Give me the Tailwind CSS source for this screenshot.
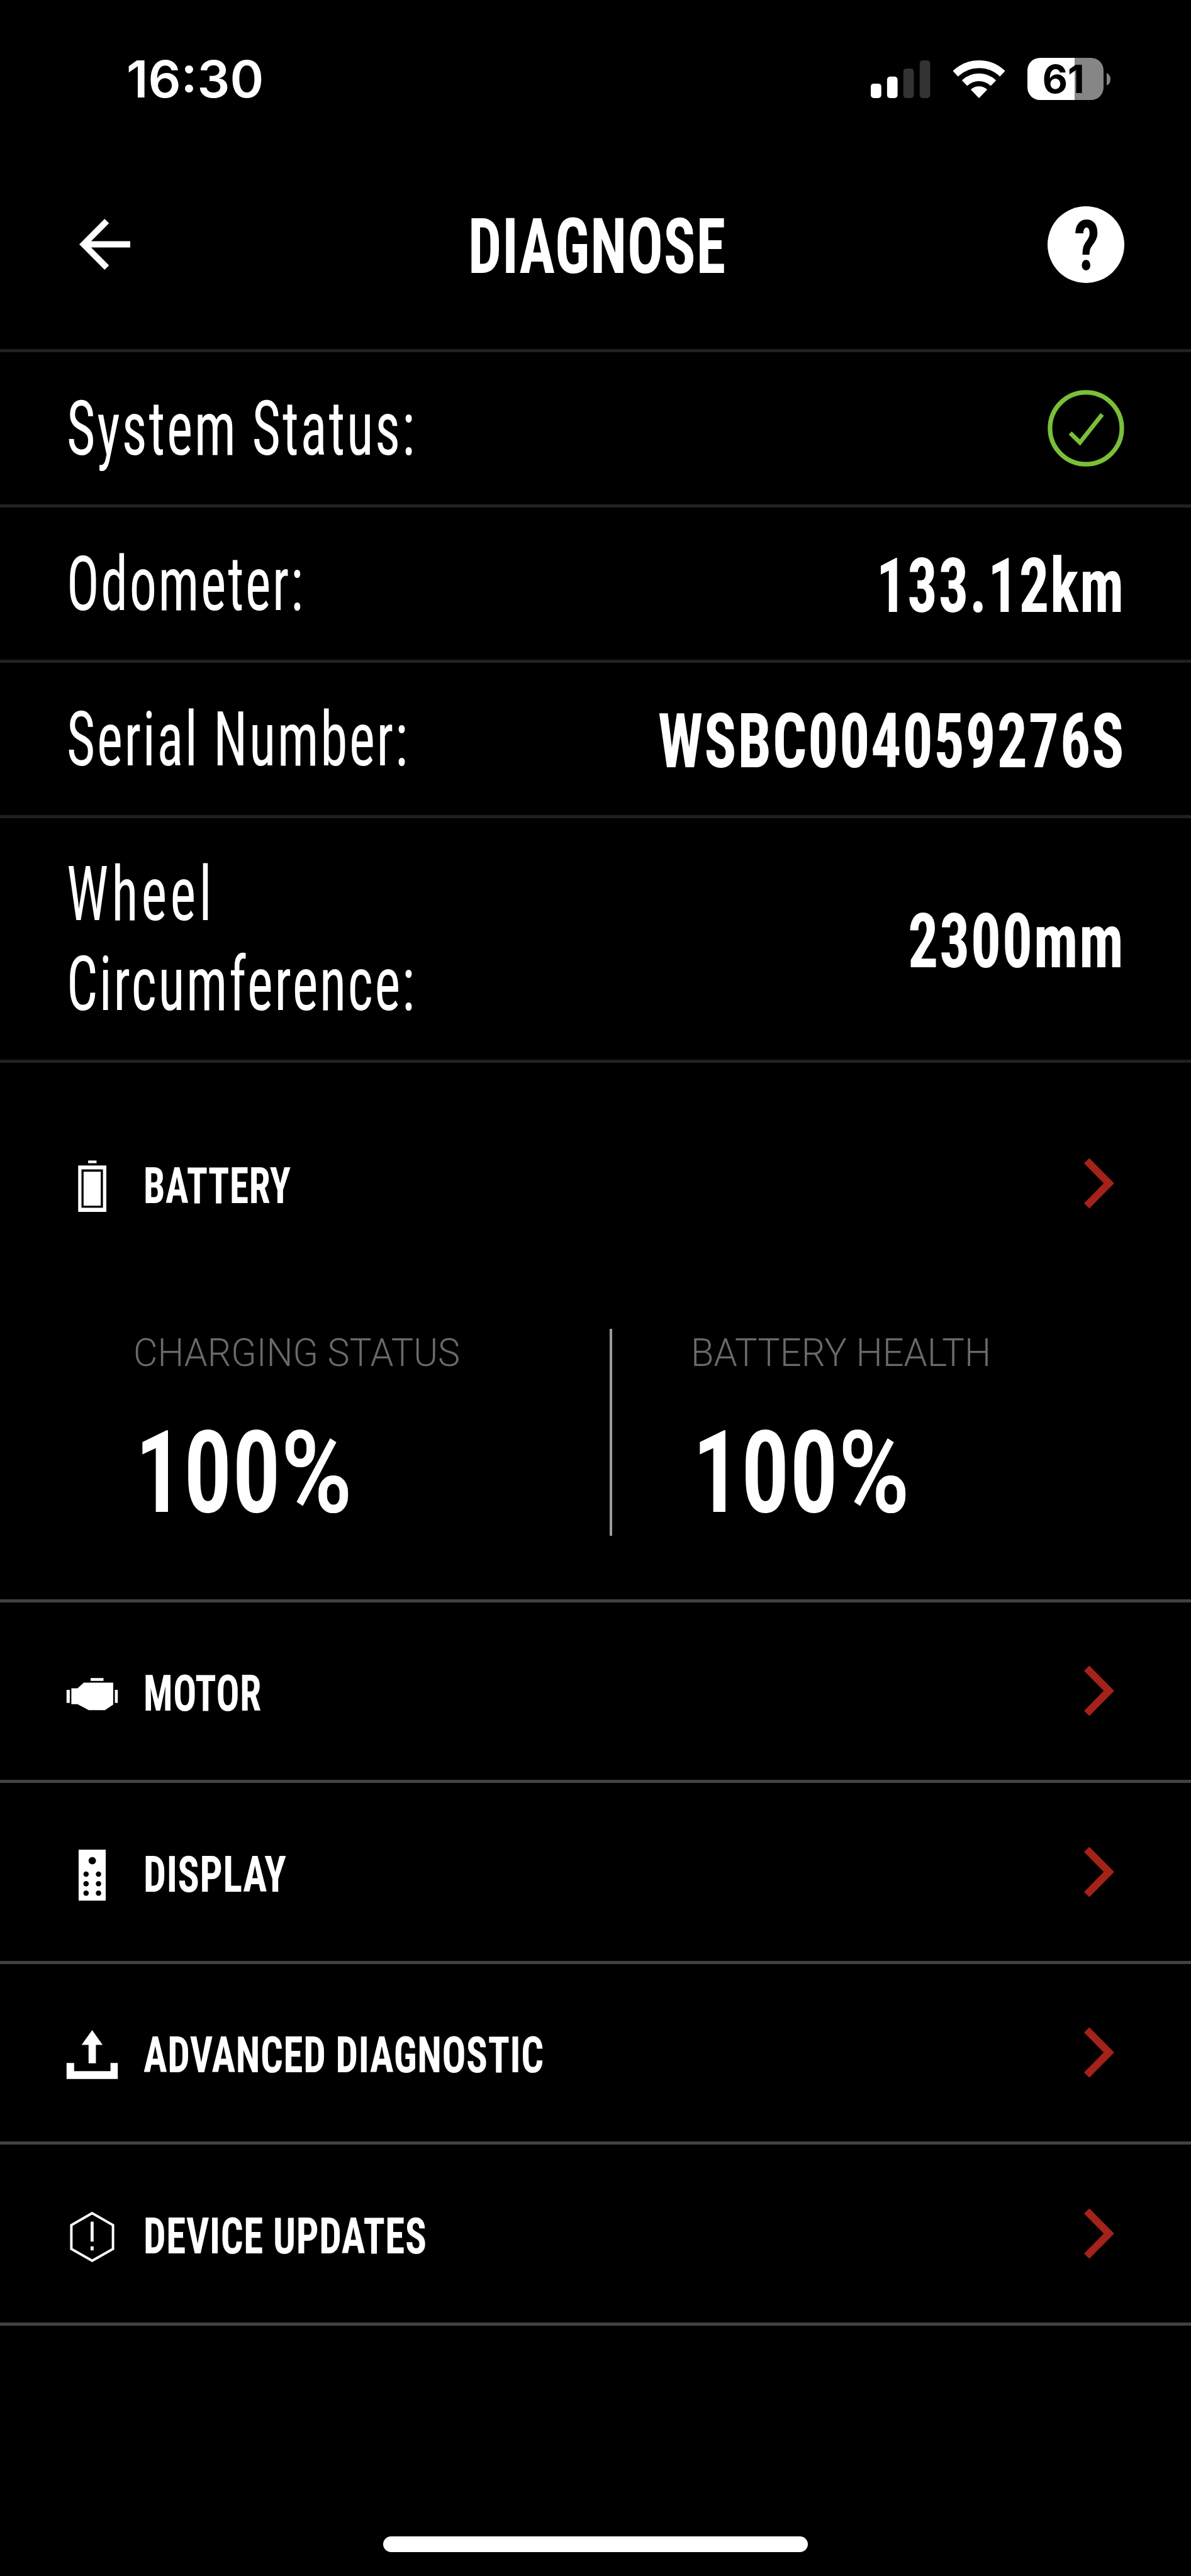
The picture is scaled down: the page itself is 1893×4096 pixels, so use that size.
<!DOCTYPE html>
<html lang="en">

<head>
   <meta charset="UTF-8">
   <meta name="viewport" content="width=device-width, initial-scale=1.0">
   <title>Diagnose</title>
   <script src="https://cdn.jsdelivr.net/npm/@tailwindcss/browser@4"></script>
</head>

<body class="bg-black">
   <div class="w-full h-[4096px] flex flex-col overflow-hidden bg-black text-white font-['Roboto',sans-serif] font-stretch-75%">

      <!-- Status bar -->
      <div class="h-[222px] shrink-0 flex items-center justify-between pt-[29px] pl-[201px] pr-[128px] font-['Inter',sans-serif] font-stretch-100%">
         <p class="text-[81.5px] leading-none font-semibold">16:30</p>
         <div class="flex items-center">
            <svg class="w-[94.5px] h-[60px]" viewBox="0 0 96 61">
               <rect x="0" y="37.5" width="17" height="23.5" rx="5" fill="#fff" />
               <rect x="26.3" y="26.3" width="17" height="34.7" rx="5" fill="#fff" />
               <rect x="52.6" y="13.3" width="17" height="47.7" rx="5" fill="#333" />
               <rect x="79" y="0" width="17" height="61" rx="5" fill="#333" />
            </svg>
            <svg class="w-[82px] h-[60px] ml-[36px]" viewBox="0 0 83 61" fill="none" stroke="#fff" stroke-width="12.4">
               <path d="M3.45 21.6A54.75 54.75 0 0 1 79.55 21.6" />
               <path d="M18.15 36.8A33.6 33.6 0 0 1 64.85 36.8" />
               <path d="M41.5 61 28.2 47.2A19.2 19.2 0 0 1 54.8 47.2Z" fill="#fff" stroke="none" />
            </svg>
            <div class="w-[121.5px] h-[67px] ml-[36px] rounded-[20px] bg-[linear-gradient(to_right,#fff_61.6%,#868686_61.6%)] flex items-center justify-center">
               <p class="pr-[6px] pt-px text-[62px] leading-none font-bold text-black">61</p>
            </div>
            <svg class="w-[6px] h-[20px] ml-[5px]" viewBox="0 0 6 20">
               <path d="M0 0Q6 3 6 10T0 20Z" fill="#868686" />
            </svg>
         </div>
      </div>

      <!-- Header -->
      <div class="h-[338px] shrink-0 flex items-center justify-between pl-[126px] pr-[106px] border-b-[5px] border-[#212121]">
         <div class="w-[122px]">
            <svg class="size-[81px]" viewBox="0 0 82 82" fill="none" stroke="#fff" stroke-width="10">
               <path d="M44.3 3.5 7 41 44.3 78.5M7 41H82" />
            </svg>
         </div>
         <p class="pt-2 pr-[20px] text-[121.5px] leading-none font-bold tracking-[0.01em] scale-x-[0.777]">DIAGNOSE</p>
         <div class="size-[122px] rounded-full bg-white flex items-center justify-center text-black">
            <p class="pt-[5px] pl-1 text-[111px] leading-none font-bold scale-x-[0.82]">?</p>
         </div>
      </div>

      <!-- Bike info -->
      <div class="h-[247px] shrink-0 flex items-center justify-between pl-[106px] pr-[106px] border-b-[5px] border-[#212121]">
         <p class="pt-0.5 w-[560px] origin-left scale-x-[0.727] whitespace-nowrap text-[121px] leading-[143px] font-normal tracking-[0.03em]">System Status:</p>
         <svg class="size-[122px]" viewBox="0 0 124 124" fill="none" stroke="#7abf38">
            <circle cx="62" cy="62" r="58" stroke-width="7.4" />
            <path d="M36.7 69.6 52.3 85 88.3 39.6" stroke-width="7" />
         </svg>
      </div>
      <div class="h-[247px] shrink-0 flex items-center justify-between pl-[106px] pr-[105px] border-b-[5px] border-[#212121]">
         <p class="pt-0.5 w-[560px] origin-left scale-x-[0.712] whitespace-nowrap text-[121px] leading-[143px] font-normal tracking-[0.03em]">Odometer:</p>
         <p class="pt-2 origin-right scale-x-[0.778] whitespace-nowrap text-[121px] leading-[143px] font-bold tracking-[0.02em]">133.12km</p>
      </div>
      <div class="h-[247px] shrink-0 flex items-center justify-between pl-[106px] pr-[105px] border-b-[5px] border-[#212121]">
         <p class="pt-0.5 w-[560px] origin-left scale-x-[0.722] whitespace-nowrap text-[121px] leading-[143px] font-normal tracking-[0.03em]">Serial Number:</p>
         <p class="pt-2 origin-right scale-x-[0.788] whitespace-nowrap text-[121px] leading-[143px] font-bold tracking-[0.02em]">WSBC004059276S</p>
      </div>
      <div class="h-[389px] shrink-0 flex items-center justify-between pl-[106px] pr-[105px] border-b-[5px] border-[#212121]">
         <p class="pt-0.5 w-[560px] origin-left scale-x-[0.718] whitespace-nowrap text-[121px] leading-[143px] font-normal tracking-[0.03em]"><span class="tracking-[0.06em]">Wheel</span><br>Circumference:</p>
         <p class="pt-2 origin-right scale-x-[0.785] whitespace-nowrap text-[121px] leading-[143px] font-bold tracking-[0.02em]">2300mm</p>
      </div>

      <!-- Battery -->
      <div class="h-[857.5px] shrink-0 pt-[48px] border-b-[5px] border-[#424242]">
         <div class="h-[287px] flex items-center pl-[105px] pr-[122px]">
            <svg class="size-[83px] mt-[10px]" viewBox="0 0 84 84" fill="#fff">
               <rect x="35.5" y="0.3" width="13.5" height="4.3" />
               <rect x="19.5" y="8.3" width="45.3" height="74.7" />
               <rect x="24.8" y="14.6" width="34.5" height="61.7" fill="#000" />
               <rect x="28.2" y="18.3" width="27.6" height="54.7" />
            </svg>
            <p class="pt-[9px] ml-[40px] origin-left scale-x-[0.762] whitespace-nowrap text-[80.5px] leading-none font-bold tracking-[0.01em]">BATTERY</p>
            <svg class="w-[48px] h-[81px] ml-auto" viewBox="0 0 49 82" fill="none" stroke="#a42219" stroke-width="12">
               <path d="M4.3 4.3 40.5 41 4.3 77.7" />
            </svg>
         </div>
         <div class="flex mt-[88px] h-[329px] pl-[212px]">
            <div class="w-[757px]">
               <p class="origin-left scale-x-[0.981] whitespace-nowrap text-[60.3px] leading-[78px] font-light font-stretch-100% text-[#6a6a6a]">CHARGING STATUS</p>
               <p class="mt-[60px] pl-[3px] origin-left scale-x-[0.842] whitespace-nowrap text-[182.5px] leading-[182px] font-[650]">100<span class="font-stretch-100%">%</span></p>
            </div>
            <div class="w-1 bg-[#9c9c9c]"></div>
            <div class="pl-[125px]">
               <p class="origin-left scale-x-[0.989] whitespace-nowrap text-[60.3px] leading-[78px] font-light font-stretch-100% text-[#6a6a6a]">BATTERY HEALTH</p>
               <p class="mt-[60px] pl-[3px] origin-left scale-x-[0.842] whitespace-nowrap text-[182.5px] leading-[182px] font-[650]">100<span class="font-stretch-100%">%</span></p>
            </div>
         </div>
      </div>

      <!-- Menu -->
      <div class="h-[287.5px] shrink-0 flex items-center pl-[105px] pr-[122px] border-b-[5px] border-[#424242]">
         <svg class="size-[83px] mt-[10px]" viewBox="0 0 84 84" fill="#fff">
            <rect x="0.8" y="35.4" width="5.2" height="21" />
            <rect x="39.5" y="16.4" width="20.7" height="4.6" />
            <path d="M8.5 33H18.5L28.5 23.7H75.8V59.2L62.5 68H36.5L18.5 58.4H8.5Z" />
            <rect x="78.5" y="35.4" width="4.7" height="21" />
         </svg>
         <p class="pt-[9px] ml-[40px] origin-left scale-x-[0.763] whitespace-nowrap text-[80.5px] leading-none font-bold tracking-[0.01em]">MOTOR</p>
         <svg class="w-[48px] h-[81px] ml-auto" viewBox="0 0 49 82" fill="none" stroke="#a42219" stroke-width="12">
            <path d="M4.3 4.3 40.5 41 4.3 77.7" />
         </svg>
      </div>
      <div class="h-[287.5px] shrink-0 flex items-center pl-[105px] pr-[122px] border-b-[5px] border-[#424242]">
         <svg class="size-[83px] mt-[10px]" viewBox="0 0 84 84" fill="#000">
            <rect x="20.2" y="1.1" width="43.6" height="82" fill="#fff" />
            <circle cx="42.2" cy="18.8" r="6" />
            <circle cx="32.2" cy="40.4" r="4.3" />
            <circle cx="52.2" cy="40.4" r="4.3" />
            <circle cx="32.2" cy="55.8" r="4.3" />
            <circle cx="52.2" cy="55.8" r="4.3" />
            <circle cx="32.2" cy="71.1" r="4.3" />
            <circle cx="52.2" cy="71.1" r="4.3" />
         </svg>
         <p class="pt-[9px] ml-[40px] origin-left scale-x-[0.792] whitespace-nowrap text-[80.5px] leading-none font-bold tracking-[0.01em]">DISPLAY</p>
         <svg class="w-[48px] h-[81px] ml-auto" viewBox="0 0 49 82" fill="none" stroke="#a42219" stroke-width="12">
            <path d="M4.3 4.3 40.5 41 4.3 77.7" />
         </svg>
      </div>
      <div class="h-[287.5px] shrink-0 flex items-center pl-[105px] pr-[122px] border-b-[5px] border-[#424242]">
         <svg class="size-[83px] mt-[10px]" viewBox="0 0 84 84" fill="#fff">
            <path d="M42 1 58.8 24.8H48V54.5H36.2V24.8H25Z" />
            <path d="M0.8 54V79.8H83.2V54H71.5V67H13V54Z" />
         </svg>
         <p class="pt-[9px] ml-[40px] origin-left scale-x-[0.783] whitespace-nowrap text-[80.5px] leading-none font-bold tracking-[0.01em]">ADVANCED DIAGNOSTIC</p>
         <svg class="w-[48px] h-[81px] ml-auto" viewBox="0 0 49 82" fill="none" stroke="#a42219" stroke-width="12">
            <path d="M4.3 4.3 40.5 41 4.3 77.7" />
         </svg>
      </div>
      <div class="h-[287.5px] shrink-0 flex items-center pl-[105px] pr-[122px] border-b-[5px] border-[#424242]">
         <svg class="size-[83px] mt-[10px]" viewBox="0 0 84 84" fill="#fff">
            <path d="M42 4.2 75.5 23.4V61.6L42 80.6 8.5 61.6V23.4Z" fill="none" stroke="#fff" stroke-width="4" />
            <rect x="39.5" y="17.8" width="4.8" height="32" />
            <rect x="39.5" y="57.5" width="4.8" height="6.5" />
         </svg>
         <p class="pt-[9px] ml-[40px] origin-left scale-x-[0.784] whitespace-nowrap text-[80.5px] leading-none font-bold tracking-[0.01em]">DEVICE UPDATES</p>
         <svg class="w-[48px] h-[81px] ml-auto" viewBox="0 0 49 82" fill="none" stroke="#a42219" stroke-width="12">
            <path d="M4.3 4.3 40.5 41 4.3 77.7" />
         </svg>
      </div>

      <!-- Home indicator -->
      <div class="mt-auto mb-[38px] mx-auto w-[675px] h-[25px] shrink-0 rounded-full bg-white"></div>
   </div>
</body>

</html>
